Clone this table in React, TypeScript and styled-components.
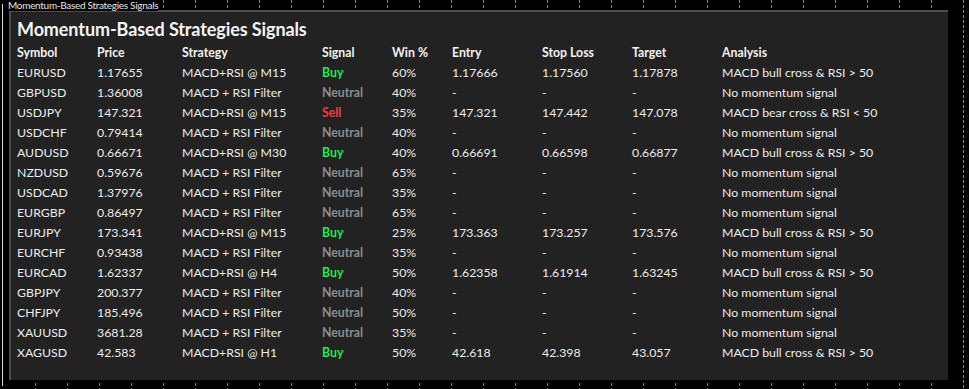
import React from "react"
import styled, { createGlobalStyle } from "styled-components"

const GlobalStyle = createGlobalStyle`
  html, body {
    margin: 0;
    padding: 0;
    background: #000;
  }
  body {
    font-family: Lato, "Open Sans", sans-serif;
  }
`

const Chart = styled.div`
  position: relative;
  width: 969px;
  height: 389px;
  background: #000;
  overflow: hidden;
  padding: 10px 0 0 9px;
  box-sizing: border-box;
`

const Marks = styled.svg`
  position: absolute;
  left: 0;
  top: 0;
  pointer-events: none;
`

const ChartLabel = styled.div`
  position: absolute;
  left: 8px;
  top: 0;
  font-size: 10px;
  line-height: 11px;
  color: #e8e8e8;
  letter-spacing: -0.3px;
  background: #000;
  z-index: 2;
`

const Panel = styled.div`
  position: relative;
  width: 939px;
  height: 370px;
  box-sizing: border-box;
  background: #222222;
  border-top: 2px solid #4c4c4c;
  border-left: 2px solid #4c4c4c;
  padding: 5px 0 0 6px;
  color: #ececec;
  z-index: 1;
`

const Title = styled.h1`
  margin: 0;
  font-size: 18px;
  line-height: 24px;
  font-weight: 700;
  color: #f4f4f4;
  letter-spacing: -0.1px;
`

const Table = styled.div`
  display: grid;
  grid-template-columns: 80px 85px 140px 70px 60px 90px 90px 90px 1fr;
  grid-auto-rows: 20px;
  margin-top: 1px;
  font-size: 12.3px;
  align-items: center;
`

const Head = styled.div`
  font-weight: 700;
  color: #f2f2f2;
`

const Cell = styled.div`
  white-space: nowrap;
`

const SignalCell = styled.div<{ $kind: string }>`
  white-space: nowrap;
  font-weight: 700;
  color: ${p => p.$kind === "Buy" ? "#26e650" : p.$kind === "Sell" ? "#f23c3c" : "#8c8c8c"};
`

const headers = ["Symbol", "Price", "Strategy", "Signal", "Win %", "Entry", "Stop Loss", "Target", "Analysis"]

const BULL = "MACD bull cross & RSI > 50"
const NONE = "No momentum signal"
const FILTER = "MACD + RSI Filter"

const rows = [
  ["EURUSD", "1.17655", "MACD+RSI @ M15", "Buy", "60%", "1.17666", "1.17560", "1.17878", BULL],
  ["GBPUSD", "1.36008", FILTER, "Neutral", "40%", "-", "-", "-", NONE],
  ["USDJPY", "147.321", "MACD+RSI @ M15", "Sell", "35%", "147.321", "147.442", "147.078", "MACD bear cross & RSI < 50"],
  ["USDCHF", "0.79414", FILTER, "Neutral", "40%", "-", "-", "-", NONE],
  ["AUDUSD", "0.66671", "MACD+RSI @ M30", "Buy", "40%", "0.66691", "0.66598", "0.66877", BULL],
  ["NZDUSD", "0.59676", FILTER, "Neutral", "65%", "-", "-", "-", NONE],
  ["USDCAD", "1.37976", FILTER, "Neutral", "35%", "-", "-", "-", NONE],
  ["EURGBP", "0.86497", FILTER, "Neutral", "65%", "-", "-", "-", NONE],
  ["EURJPY", "173.341", "MACD+RSI @ M15", "Buy", "25%", "173.363", "173.257", "173.576", BULL],
  ["EURCHF", "0.93438", FILTER, "Neutral", "35%", "-", "-", "-", NONE],
  ["EURCAD", "1.62337", "MACD+RSI @ H4", "Buy", "50%", "1.62358", "1.61914", "1.63245", BULL],
  ["GBPJPY", "200.377", FILTER, "Neutral", "40%", "-", "-", "-", NONE],
  ["CHFJPY", "185.496", FILTER, "Neutral", "50%", "-", "-", "-", NONE],
  ["XAUUSD", "3681.28", FILTER, "Neutral", "35%", "-", "-", "-", NONE],
  ["XAGUSD", "42.583", "MACD+RSI @ H1", "Buy", "50%", "42.618", "42.398", "43.057", BULL],
]

// chart tick marks along top and bottom, plus the dashed right edge
function ChartMarks() {
  const ticks: number[] = []
  for (let x = 35; x < 950; x += 32) ticks.push(x + 0.5)
  const dash = "3 2"
  return (
    <Marks width={969} height={389}>
      <line x1={2.5} y1={4} x2={2.5} y2={386} stroke="#d8d8d8" strokeWidth={1} />
      {ticks.map(x => (
        <g key={x} stroke="#7d8b99" strokeWidth={1} strokeDasharray={dash}>
          <line x1={x} y1={0} x2={x} y2={9} />
          <line x1={x} y1={383} x2={x} y2={389} />
        </g>
      ))}
      <line x1={963.5} y1={0} x2={963.5} y2={389} stroke="#7d8b99" strokeWidth={1} strokeDasharray={dash} />
    </Marks>
  )
}

export default function App() {
  return (
    <>
      <GlobalStyle />
      <Chart>
        <ChartMarks />
        <ChartLabel>Momentum-Based Strategies Signals</ChartLabel>
        <Panel>
          <Title>Momentum-Based Strategies Signals</Title>
          <Table>
            {headers.map(h => <Head key={h}>{h}</Head>)}
            {rows.map(r => r.map((v, i) =>
              i === 3
                ? <SignalCell key={r[0] + i} $kind={v}>{v}</SignalCell>
                : <Cell key={r[0] + i}>{v}</Cell>
            ))}
          </Table>
        </Panel>
      </Chart>
    </>
  )
}
